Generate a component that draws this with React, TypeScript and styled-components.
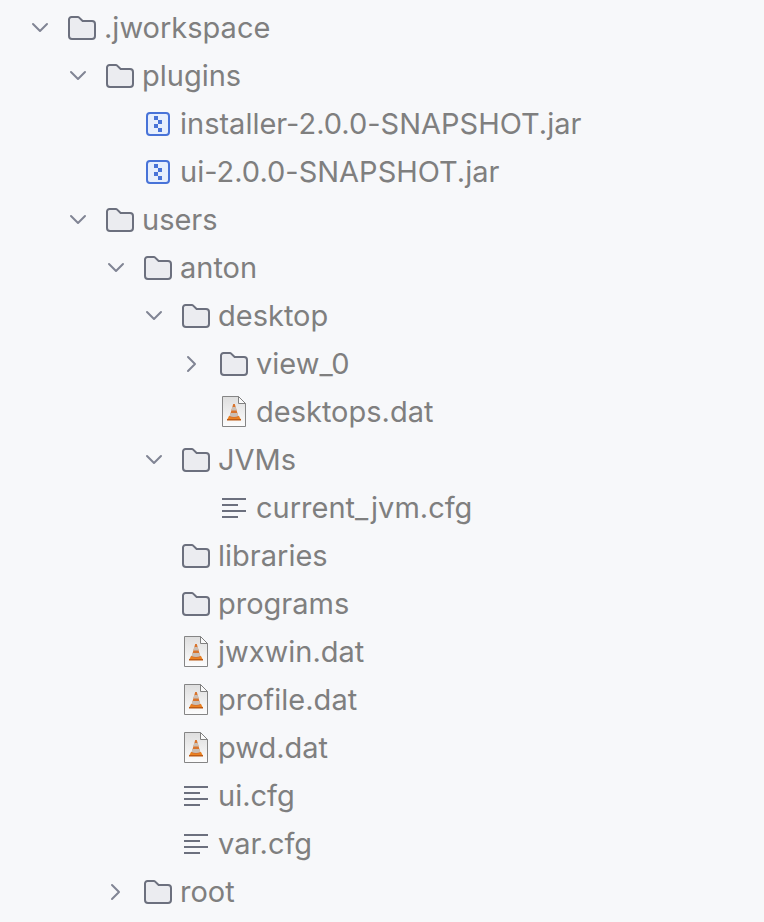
import React from "react";
import styled, { createGlobalStyle } from "styled-components";

const Global = createGlobalStyle`
  * { box-sizing: border-box; }
  body { margin: 0; background: #f7f8fa; }
`;

const Tree = styled.ul`
  min-height: 100vh;
  margin: 0;
  padding: 4px 0 0;
  list-style: none;
  overflow: hidden;
  font: 29px/48px Inter, sans-serif;
  font-feature-settings: "calt" 0;
  color: #7f7f7f;
`;

const Row = styled.li<{ $depth: number }>`
  display: flex;
  align-items: center;
  height: 48px;
  padding-left: ${(p) => 24 + p.$depth * 38}px;
`;

const Toggle = styled.button`
  display: flex;
  width: 32px;
  height: 32px;
  padding: 0;
  border: 0;
  background: none;
`;

const Spacer = styled.span`
  width: 32px;
`;

const Icon = styled.svg`
  width: 32px;
  height: 32px;
  margin: 0 6px 0 10px;
  flex: none;
`;

const Chevron = styled.svg`
  width: 32px;
  height: 32px;
  fill: none;
  stroke: #818594;
  stroke-width: 2;
  stroke-linecap: round;
  stroke-linejoin: round;
`;

type Kind = "folder" | "jar" | "dat" | "cfg";
const items: { name: string; depth: number; kind: Kind; open?: boolean }[] = [
  { name: ".jworkspace", depth: 0, kind: "folder", open: true },
  { name: "plugins", depth: 1, kind: "folder", open: true },
  { name: "installer-2.0.0-SNAPSHOT.jar", depth: 2, kind: "jar" },
  { name: "ui-2.0.0-SNAPSHOT.jar", depth: 2, kind: "jar" },
  { name: "users", depth: 1, kind: "folder", open: true },
  { name: "anton", depth: 2, kind: "folder", open: true },
  { name: "desktop", depth: 3, kind: "folder", open: true },
  { name: "view_0", depth: 4, kind: "folder", open: false },
  { name: "desktops.dat", depth: 4, kind: "dat" },
  { name: "JVMs", depth: 3, kind: "folder", open: true },
  { name: "current_jvm.cfg", depth: 4, kind: "cfg" },
  { name: "libraries", depth: 3, kind: "folder" },
  { name: "programs", depth: 3, kind: "folder" },
  { name: "jwxwin.dat", depth: 3, kind: "dat" },
  { name: "profile.dat", depth: 3, kind: "dat" },
  { name: "pwd.dat", depth: 3, kind: "dat" },
  { name: "ui.cfg", depth: 3, kind: "cfg" },
  { name: "var.cfg", depth: 3, kind: "cfg" },
  { name: "root", depth: 2, kind: "folder", open: false },
];

function FileIcon({ kind }: { kind: Kind }) {
  return (
    <Icon viewBox="0 0 32 32" aria-hidden="true">
      {kind === "folder" && (
        <path d="M3 7.500A2.500 2.500 0 0 1 5.500 5h6.300a2 2 0 0 1 1.400.600L16.600 9H26a3 3 0 0 1 3 3v12a3 3 0 0 1-3 3H6a3 3 0 0 1-3-3Z" fill="#ebecf0" stroke="#6c707e" strokeWidth="2" />
      )}
      {kind === "jar" && (
        <>
          <rect x="5" y="5" width="22" height="22" rx="3" fill="#e7effd" stroke="#4873d8" strokeWidth="2" />
          <path d="M12 8h4v4h-4zM16 12h4v4h-4zM12 16h4v4h-4zM16 20h4v4h-4z" fill="#4873d8" />
        </>
      )}
      {kind === "cfg" && <path d="M4 7h24M4 13h16M4 19h24M4 25h16" stroke="#6c707e" strokeWidth="2" />}
      {kind === "dat" && (
        <>
          <defs>
            <linearGradient id="paper" x1="0" y1="0" x2="0" y2="1">
              <stop offset="0" stopColor="#dedede" />
              <stop offset="1" stopColor="#fdfdfd" />
            </linearGradient>
          </defs>
          <path d="M4.500.500h16l7 7v23h-23z" fill="url(#paper)" stroke="#858585" />
          <path d="M20.500.500v7h7z" fill="#fafafa" stroke="#808080" />
          <path d="M11 20h10l2 4H9z" fill="#ec8220" />
          <path d="M9 23h14v1.500H9z" fill="#bd5a14" />
          <path d="M15.200 8h1.600l3.700 13q-4.500 2-9 0z" fill="#d9742c" />
          <path d="M14.300 11h3.400l1 3.500h-5.400zM12.500 17h7l.900 3q-4.400 1.800-8.800 0z" fill="#cbbfb5" />
        </>
      )}
    </Icon>
  );
}

export default function App() {
  return (
    <>
      <Global />
      <Tree>
        {items.map((item) => (
          <Row key={item.name} $depth={item.depth}>
            {item.open === undefined ? (
              <Spacer />
            ) : (
              <Toggle aria-label={item.name} aria-expanded={item.open}>
                <Chevron viewBox="0 0 32 32">
                  <path d={item.open ? "M9 12l7 7 7-7" : "M12 9l7 7-7 7"} />
                </Chevron>
              </Toggle>
            )}
            <FileIcon kind={item.kind} />
            <span>{item.name}</span>
          </Row>
        ))}
      </Tree>
    </>
  );
}
